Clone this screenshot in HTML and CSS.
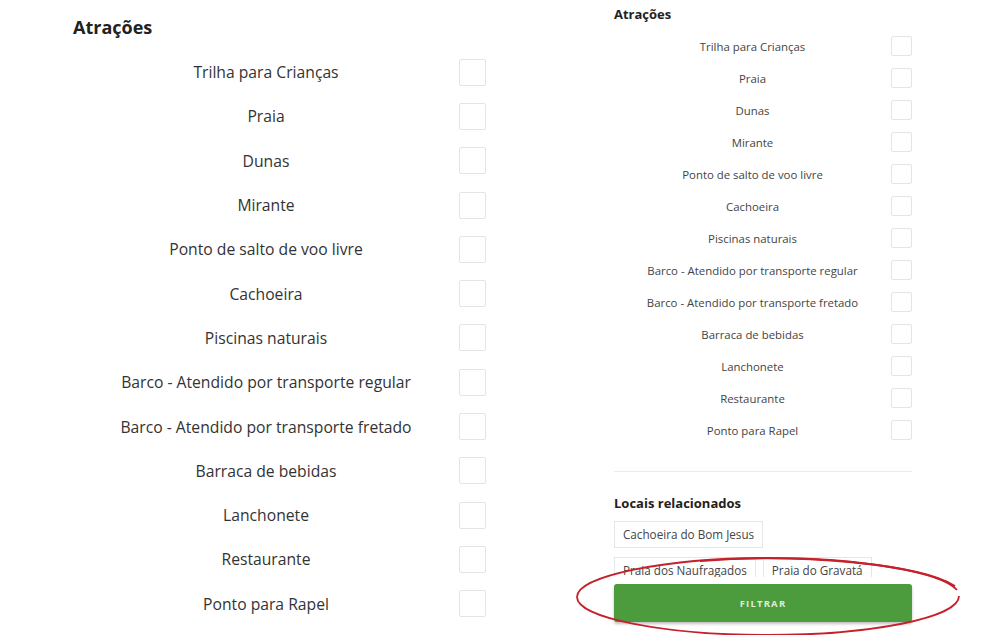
FILE: index.html
```html
<!DOCTYPE html>
<html lang="pt-BR">
<head>
  <meta charset="UTF-8" />
  <meta name="viewport" content="width=device-width, initial-scale=1.0"/>
  <title>Filtros</title>
  <link rel="stylesheet" href="styles.css">
</head>
<body>
  <div class="page">
    <div class="panel panel-large">
      <h2 class="title">Atrações</h2>
      <ul class="options">
        <li class="option"><span class="option-name">Trilha para Crianças</span><span class="check"></span></li>
        <li class="option"><span class="option-name">Praia</span><span class="check"></span></li>
        <li class="option"><span class="option-name">Dunas</span><span class="check"></span></li>
        <li class="option"><span class="option-name">Mirante</span><span class="check"></span></li>
        <li class="option"><span class="option-name">Ponto de salto de voo livre</span><span class="check"></span></li>
        <li class="option"><span class="option-name">Cachoeira</span><span class="check"></span></li>
        <li class="option"><span class="option-name">Piscinas naturais</span><span class="check"></span></li>
        <li class="option"><span class="option-name">Barco - Atendido por transporte regular</span><span class="check"></span></li>
        <li class="option"><span class="option-name">Barco - Atendido por transporte fretado</span><span class="check"></span></li>
        <li class="option"><span class="option-name">Barraca de bebidas</span><span class="check"></span></li>
        <li class="option"><span class="option-name">Lanchonete</span><span class="check"></span></li>
        <li class="option"><span class="option-name">Restaurante</span><span class="check"></span></li>
        <li class="option"><span class="option-name">Ponto para Rapel</span><span class="check"></span></li>
      </ul>
    </div>

    <div class="panel panel-small">
      <h2 class="title">Atrações</h2>
      <ul class="options">
        <li class="option"><span class="option-name">Trilha para Crianças</span><span class="check"></span></li>
        <li class="option"><span class="option-name">Praia</span><span class="check"></span></li>
        <li class="option"><span class="option-name">Dunas</span><span class="check"></span></li>
        <li class="option"><span class="option-name">Mirante</span><span class="check"></span></li>
        <li class="option"><span class="option-name">Ponto de salto de voo livre</span><span class="check"></span></li>
        <li class="option"><span class="option-name">Cachoeira</span><span class="check"></span></li>
        <li class="option"><span class="option-name">Piscinas naturais</span><span class="check"></span></li>
        <li class="option"><span class="option-name">Barco - Atendido por transporte regular</span><span class="check"></span></li>
        <li class="option"><span class="option-name">Barco - Atendido por transporte fretado</span><span class="check"></span></li>
        <li class="option"><span class="option-name">Barraca de bebidas</span><span class="check"></span></li>
        <li class="option"><span class="option-name">Lanchonete</span><span class="check"></span></li>
        <li class="option"><span class="option-name">Restaurante</span><span class="check"></span></li>
        <li class="option"><span class="option-name">Ponto para Rapel</span><span class="check"></span></li>
      </ul>

      <hr class="divider">

      <h3 class="subtitle">Locais relacionados</h3>
      <div class="tags">
        <span class="tag">Cachoeira do Bom Jesus</span>
        <span class="tag">Praia dos Naufragados</span>
        <span class="tag">Praia do Gravatá</span>
      </div>
      <button class="filter-btn">FILTRAR</button>
    </div>

    <!-- red marker drawn over the button -->
    <svg class="mark" width="396" height="88" viewBox="0 0 396 88">
      <path d="M 389 44 C 389 66, 300 83, 198 83 C 95 83, 7 66, 7 45 C 7 24, 95 6, 198 6 C 290 6, 372 20, 387 38" />
      <path d="M 130 9 C 230 1, 350 12, 385 34" />
    </svg>
  </div>
</body>
</html>
```

FILE: styles.css
```css
* {
  margin: 0;
  padding: 0;
  box-sizing: border-box;
  font-family: "Open Sans", Arial, sans-serif;
}

body {
  background: #fff;
  color: #333;
}

.page {
  position: relative;
  display: flex;
  align-items: flex-start;
  gap: 128px;
  padding-left: 73px;
  width: 984px;
  height: 635px;
  overflow: hidden;
}

.panel {
  display: flex;
  flex-direction: column;
}

.title {
  font-weight: 700;
  color: #222;
}

.options {
  list-style: none;
}

.option {
  display: flex;
  align-items: center;
}

.option-name {
  flex: 1;
  text-align: center;
}

.check {
  border: 1px solid #e4e4e4;
  border-radius: 2px;
  background: #fff;
}

/* large version */
.panel-large {
  width: 413px;
  padding-top: 14px;
}

.panel-large .title {
  font-size: 18px;
  line-height: 26px;
  margin-bottom: 10px;
}

.panel-large .option {
  height: 44.3px;
  font-size: 15.7px;
  color: #333;
}

.panel-large .check {
  width: 27px;
  height: 27px;
}

/* small version */
.panel-small {
  width: 298px;
  padding-top: 5px;
}

.panel-small .title {
  font-size: 13px;
  line-height: 18px;
  margin-bottom: 7px;
}

.panel-small .option {
  height: 32px;
  font-size: 11.4px;
  color: #444;
}

.panel-small .check {
  width: 21px;
  height: 20px;
}

.divider {
  border: none;
  border-top: 1px solid #ebebeb;
  margin: 25px 0 22px;
}

.subtitle {
  font-size: 13px;
  line-height: 18px;
  font-weight: 700;
  color: #222;
  margin-bottom: 9px;
}

.tags {
  display: flex;
  flex-wrap: wrap;
  gap: 9px 7px;
  width: 280px;
  height: 56px;
  overflow: hidden;
}

.tag {
  display: inline-block;
  height: 27px;
  line-height: 25px;
  padding: 0 8px;
  border: 1px solid #e6e6e6;
  font-size: 11.7px;
  color: #444;
}

.filter-btn {
  margin-top: 7px;
  height: 38px;
  border: none;
  border-radius: 3px;
  background: #4c9b3c;
  color: #dcefd4;
  font-size: 9.5px;
  font-weight: 700;
  letter-spacing: 1.2px;
  box-shadow: 0 2px 3px rgba(0, 0, 0, 0.25);
  cursor: pointer;
}

.mark {
  position: absolute;
  left: 570px;
  top: 552px;
  fill: none;
  stroke: #c4212b;
  stroke-width: 1.8;
}
```
